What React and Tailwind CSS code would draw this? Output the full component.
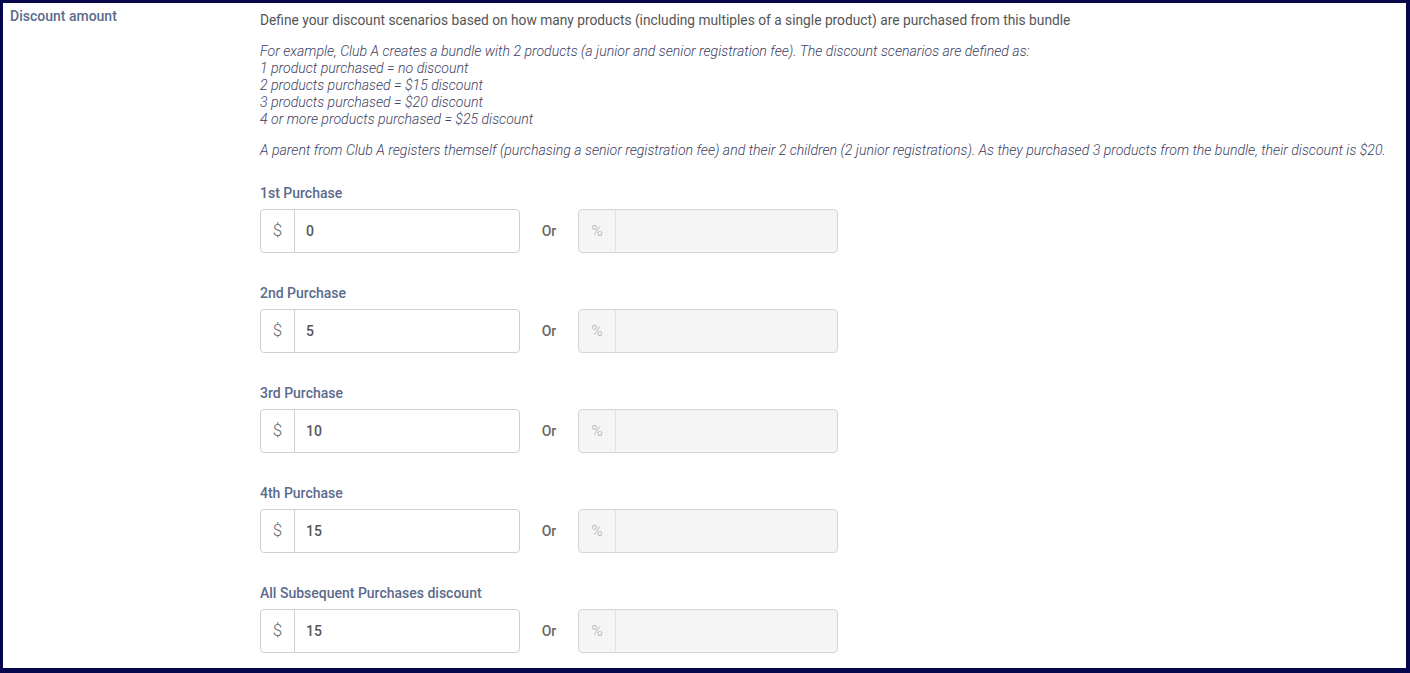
import React from "react";

const rows = [
  { label: "1st Purchase", value: "0" },
  { label: "2nd Purchase", value: "5" },
  { label: "3rd Purchase", value: "10" },
  { label: "4th Purchase", value: "15" },
  { label: "All Subsequent Purchases discount", value: "15" },
];

const PurchaseRow = ({ label, value }) => (
  <div>
    <div className="text-[14px] font-medium text-[#5a6b8c] leading-[17px]">{label}</div>
    <div className="flex items-center mt-[7px]">
      <div className="flex w-[260px] h-[44px] border border-[#d0d0d0] rounded-[4px] bg-white">
        <div className="w-[34px] flex items-center justify-center border-r border-[#d0d0d0] text-[17px] text-[#6b6b6b] font-light">$</div>
        <div className="flex items-center pl-[11px] text-[14px] font-medium text-[#555]">{value}</div>
      </div>
      <div className="w-[58px] text-center text-[14px] font-medium text-[#666]">Or</div>
      <div className="flex w-[260px] h-[44px] border border-[#d6d6d6] rounded-[4px] bg-[#f5f5f5]">
        <div className="w-[37px] flex items-center justify-center border-r border-[#e2e2e2] text-[15px] text-[#aaa] font-light">%</div>
        <div className="flex-1" />
      </div>
    </div>
  </div>
);

export default function App() {
  return (
    <div className="w-[1410px] h-[673px] bg-[#06064d] pt-[3px] pl-[3px] pr-[4px] pb-[5px]" style={{ fontFamily: "Roboto, 'Liberation Sans', sans-serif" }}>
      <div className="bg-white h-full flex overflow-hidden">
        <div className="w-[257px] pl-[7px] pt-[5px] text-[14px] font-medium text-[#5a6b8c] leading-[17px]">Discount amount</div>
        <div className="flex-1 pt-[9px]">
          <p className="text-[13.75px] text-[#555] leading-[17px]">
            Define your discount scenarios based on how many products (including multiples of a single product) are purchased from this bundle
          </p>
          <div className="mt-[14px] text-[14.1px] italic font-light text-[#3d4163] leading-[17px]">
            <div>For example, Club A creates a bundle with 2 products (a junior and senior registration fee). The discount scenarios are defined as:</div>
            <div>1 product purchased = no discount</div>
            <div>2 products purchased = $15 discount</div>
            <div>3 products purchased = $20 discount</div>
            <div>4 or more products purchased = $25 discount</div>
          </div>
          <p className="mt-[14px] text-[14.1px] italic font-light text-[#3d4163] leading-[17px] whitespace-nowrap">
            A parent from Club A registers themself (purchasing a senior registration fee) and their 2 children (2 junior registrations). As they purchased 3 products from the bundle, their discount is $20.
          </p>
          <div className="mt-[26px] flex flex-col gap-[32px]">
            {rows.map((r) => (
              <PurchaseRow key={r.label} {...r} />
            ))}
          </div>
        </div>
      </div>
    </div>
  );
}
